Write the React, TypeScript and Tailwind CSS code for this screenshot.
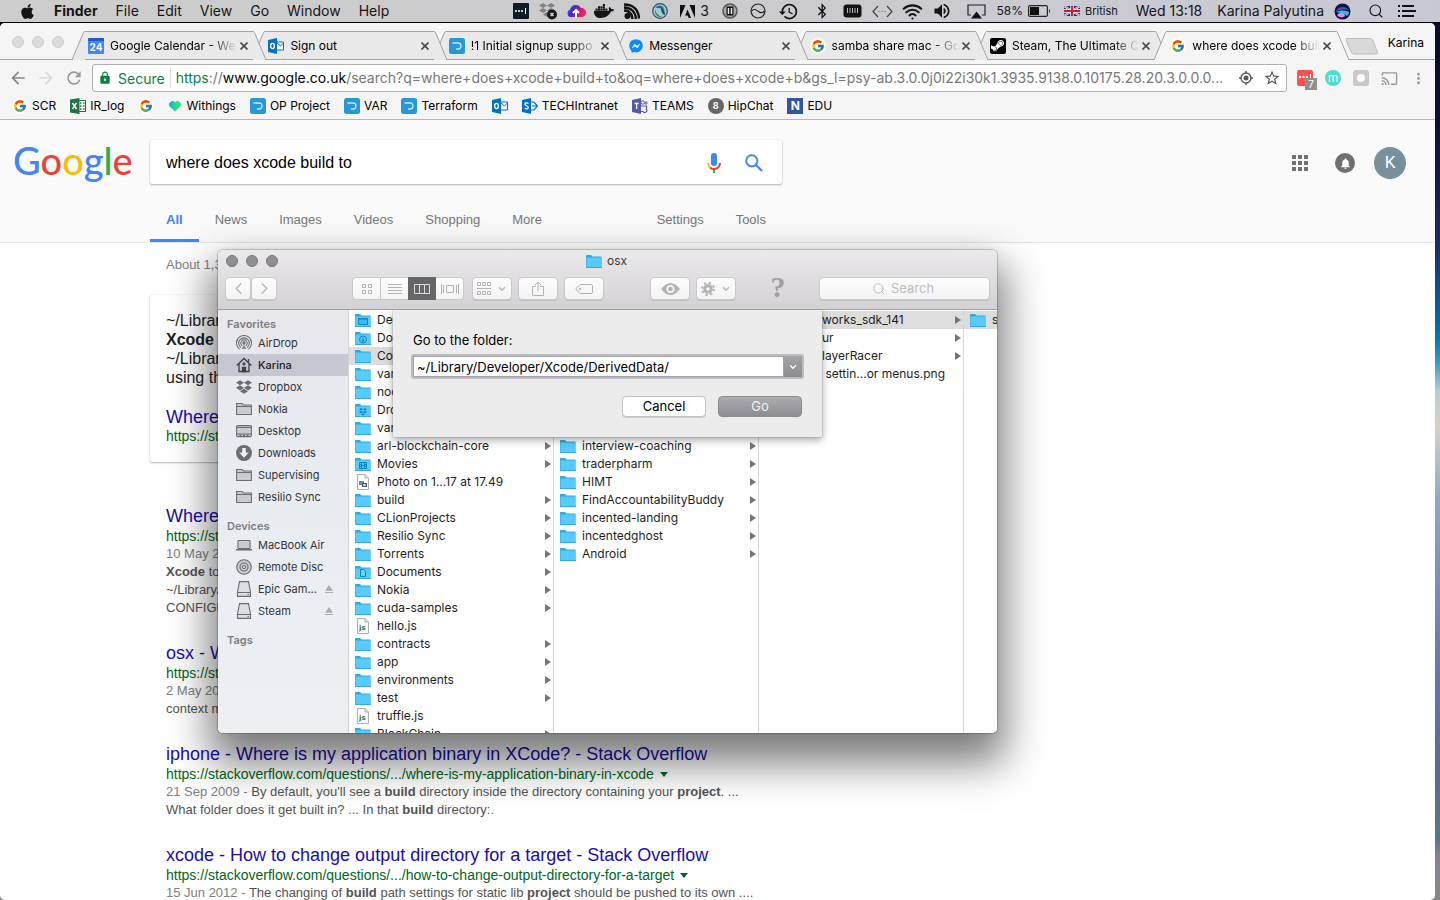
import type { ReactNode } from "react";
import { FaApple, FaBluetoothB, FaDocker, FaDropbox, FaFacebookMessenger, FaSteamSymbol } from "react-icons/fa";
import { FcGoogle } from "react-icons/fc";
import {
  MdArrowBack,
  MdArrowForward,
  MdCast,
  MdEject,
  MdHistory,
  MdLock,
  MdMoreVert,
  MdNotifications,
  MdRefresh,
  MdStarBorder,
  MdVolumeUp,
} from "react-icons/md";
import { ChevronDown, ChevronLeft, ChevronRight, Search, Wifi } from "lucide-react";

const UI = "font-['Inter',sans-serif]";
const ARIAL = "font-['Liberation_Sans',sans-serif]";

/* ---------- menu bar ---------- */

function MenuIcon({ width, label, children }: { width: string; label: string; children: ReactNode }) {
  return (
    <button aria-label={label} className={`flex h-[22px] shrink-0 items-center justify-center ${width}`}>
      {children}
    </button>
  );
}

function MenuBar() {
  return (
    <header
      className={`flex h-[22px] shrink-0 items-center bg-linear-to-r from-[#cdcdcd] via-[#cbcbcd] to-[#c8c8d4] pl-[19px] pr-[17px] text-[14px] leading-[22px] whitespace-nowrap text-[#151515] ${UI}`}
    >
      <nav className="flex items-center gap-[18px]">
        <button aria-label="Apple menu">
          <FaApple size={17} />
        </button>
        <button className="font-bold">Finder</button>
        <button>File</button>
        <button>Edit</button>
        <button>View</button>
        <button>Go</button>
        <button>Window</button>
        <button>Help</button>
      </nav>
      <div className="ml-auto flex items-center">
        <MenuIcon width="w-[26px]" label="Password manager">
          <svg width="16" height="16" viewBox="0 0 16 16">
            <rect width="16" height="16" rx="1" fill="#0c1c26" />
            <g fill="#fff">
              <circle cx="3" cy="8" r="1" />
              <circle cx="6" cy="8" r="1" />
              <circle cx="9" cy="8" r="1" />
              <rect x="12" y="5" width="1" height="6" />
            </g>
          </svg>
        </MenuIcon>
        <MenuIcon width="w-[28px]" label="Dropbox">
          <svg width="20" height="18" viewBox="0 0 20 18">
            <path d="M5 1l4 2.500L5 6 1 3.500zM13 1l4 2.500L13 6 9 3.500zM5 6l4 2.500L5 11 1 8.500zM13 6l4 2.500-4 2.500-4-2.500zM9 10l4 2.500L9 15l-4-2.500z" fill="#808085" />
            <circle cx="14" cy="12.500" r="5" fill="#1a1a1a" />
            <path d="M12.500 11l3 3M15.500 11l-3 3" stroke="#ddd" strokeWidth="1.300" />
          </svg>
        </MenuIcon>
        <MenuIcon width="w-[28px]" label="Cloud upload">
          <svg width="20" height="16" viewBox="0 0 20 16">
            <defs>
              <linearGradient id="cloud" x1="0" x2="1" y1="0" y2=".3">
                <stop offset="0" stopColor="#3a62f0" />
                <stop offset=".4" stopColor="#3b2bc8" />
                <stop offset=".65" stopColor="#b01890" />
                <stop offset="1" stopColor="#f8205a" />
              </linearGradient>
            </defs>
            <path d="M4 14a4 4 0 0 1 0-7.500A6 6 0 0 1 15 5a4.500 4.500 0 0 1 1 9z" fill="url(#cloud)" />
            <path d="M10 15V8M7 10l3-3 3 3" stroke="#fff" strokeWidth="2" fill="none" />
          </svg>
        </MenuIcon>
        <MenuIcon width="w-[28px]" label="Docker">
          <FaDocker size={20} />
        </MenuIcon>
        <MenuIcon width="w-[28px]" label="Feed">
          <svg width="17" height="17" viewBox="0 0 17 17" fill="none" stroke="#111" strokeWidth="2.400">
            <circle cx="4.500" cy="13" r="3" fill="#111" stroke="none" />
            <path d="M1 7.500c5 0 8 3 8.500 8.500M1 4.500c7.500 0 11.500 5 12 11.500M1 1.500c9 0 14.500 5 15 14" />
          </svg>
        </MenuIcon>
        <MenuIcon width="w-[28px]" label="Globe">
          <svg width="16" height="16" viewBox="0 0 16 16">
            <circle cx="8" cy="8" r="7.300" fill="#a9c7cf" stroke="#30505e" strokeWidth="1.200" />
            <path d="M3 5c3-4 8-3 9 1l2 3c-1-2-7-5-11-4z" fill="#156f8e" />
            <path d="M3 6c1 5 4 7 7 8-4 1-8-3-7-8z" fill="#208a45" />
            <path d="M9 5c3 1 4 4 4 7-2 0-4-3-4-7z" fill="#14506e" />
          </svg>
        </MenuIcon>
        <MenuIcon width="w-[42px]" label="Creative apps, 3 updates">
          <svg width="15" height="13" viewBox="0 0 15 13" fill="#0d0d0d">
            <path d="M0 0h5.500L0 13zM15 0H9.500L15 13zM7.500 4.500L11 13H8.700l-1-2.600H5.200z" />
          </svg>
          <span className="pl-[5px]">3</span>
        </MenuIcon>
        <MenuIcon width="w-[28px]" label="Pause">
          <svg width="16" height="16" viewBox="0 0 16 16" fill="none">
            <circle cx="8" cy="8" r="7" stroke="#555" strokeWidth="1.500" fill="#aaa" />
            <rect x="4.500" y="3.500" width="7" height="9" fill="#111" />
            <path d="M6.500 5v6M9.500 5v6" stroke="#eee" strokeWidth="1.500" />
          </svg>
        </MenuIcon>
        <MenuIcon width="w-[28px]" label="Monitor">
          <svg width="16" height="16" viewBox="0 0 16 16" fill="none" stroke="#222" strokeWidth="1.200">
            <circle cx="8" cy="8" r="7" />
            <path d="M1.500 8c3-3 5-1 7 .5s4 1.500 6-.5" />
          </svg>
        </MenuIcon>
        <MenuIcon width="w-[34px]" label="Time Machine">
          <MdHistory size={21} />
        </MenuIcon>
        <MenuIcon width="w-[32px]" label="Bluetooth">
          <FaBluetoothB size={16} />
        </MenuIcon>
        <MenuIcon width="w-[30px]" label="Memory">
          <svg width="19" height="14" viewBox="0 0 19 14">
            <rect x=".5" y=".5" width="18" height="13" rx="3" fill="#111" />
            <path d="M4.500 4v5M7 4v5M9.500 4v5M12 4v5M14.500 4v5" stroke="#bbb" />
          </svg>
        </MenuIcon>
        <MenuIcon width="w-[30px]" label="Network">
          <svg width="21" height="13" viewBox="0 0 21 13" fill="none" stroke="#444" strokeWidth="1.200">
            <path d="M6 1L1 6.500 6 12M15 1l5 5.500-5 5.500" />
            <path d="M6.500 6.500h8" strokeDasharray="1.500 1.500" stroke="#888" />
          </svg>
        </MenuIcon>
        <MenuIcon width="w-[30px]" label="Wi-Fi">
          <Wifi size={21} strokeWidth={2.4} />
        </MenuIcon>
        <MenuIcon width="w-[28px]" label="Volume">
          <MdVolumeUp size={20} />
        </MenuIcon>
        <MenuIcon width="w-[41px]" label="AirPlay">
          <svg width="19" height="15" viewBox="0 0 19 15">
            <path d="M4 11H1V1h17v10h-3" fill="none" stroke="#222" strokeWidth="1.200" />
            <path d="M9.500 7.500L15 14.500H4z" fill="#111" />
          </svg>
        </MenuIcon>
        <span className="text-[12px]">58%</span>
        <MenuIcon width="w-[32px]" label="Battery">
          <svg width="23" height="12" viewBox="0 0 23 12">
            <rect x=".6" y=".6" width="18.800" height="10.800" rx="1.500" fill="none" stroke="#222" strokeWidth="1.200" />
            <rect x="2" y="2" width="9" height="8" fill="#111" />
            <path d="M21 4q2 2 0 4z" fill="#222" />
          </svg>
        </MenuIcon>
        <button className="ml-[9px] flex items-center gap-[5px] text-[11px]">
          <svg width="16" height="10" viewBox="0 0 16 10">
            <rect width="16" height="10" fill="#1d2f7c" />
            <path d="M0 0l16 10M16 0L0 10" stroke="#fff" strokeWidth="2" />
            <path d="M0 0l16 10M16 0L0 10" stroke="#c8202f" strokeWidth=".7" />
            <path d="M8 0v10M0 5h16" stroke="#fff" strokeWidth="3.400" />
            <path d="M8 0v10M0 5h16" stroke="#c8202f" strokeWidth="2" />
          </svg>
          British
        </button>
        <button className="pl-[18px]">Wed 13:18</button>
        <button className="pl-[15px]">Karina Palyutina</button>
        <MenuIcon width="w-[36px]" label="Siri">
          <svg width="17" height="17" viewBox="0 0 17 17">
            <circle cx="8.500" cy="8.500" r="8" fill="#14123f" />
            <path d="M2 8c3-5 9-5 13-1-5-1-9 0-13 1z" fill="#3957d8" />
            <path d="M2 9c4-2 9-2 13 0 0 2-1 3-2 4-3-3-7-3-11-4z" fill="#2fb8e0" />
            <path d="M3 12c3-3 7-3 8 1-2 2-6 2-8-1z" fill="#e08ae8" />
          </svg>
        </MenuIcon>
        <MenuIcon width="w-[31px]" label="Spotlight">
          <Search size={16} strokeWidth={1.7} />
        </MenuIcon>
        <MenuIcon width="w-[32px]" label="Notification Center">
          <svg width="18" height="12" viewBox="0 0 18 12" stroke="#111" strokeWidth="2">
            <path d="M0 1h2M4 1h12M0 6h2M4 6h14M0 11h2M4 11h12" />
          </svg>
        </MenuIcon>
      </div>
    </header>
  );
}

/* ---------- small site icons ---------- */

function GoogleIcon() {
  return (
    <span className="flex size-[16px] shrink-0 items-center justify-center rounded-full bg-white">
      <FcGoogle size={14} />
    </span>
  );
}

function DocIcon() {
  return (
    <svg width="16" height="16" viewBox="0 0 16 16" className="shrink-0">
      <rect width="16" height="16" rx="2.500" fill="#2698d6" />
      <path d="M3.500 5H9a3 3 0 0 1 0 6H7" fill="none" stroke="#c9e6f6" strokeWidth="1.300" />
    </svg>
  );
}

function OutlookIcon() {
  return (
    <svg width="16" height="16" viewBox="0 0 16 16" className="shrink-0">
      <path d="M9 4h6.500v8H9M9 5l3.500 3L15.500 5" fill="#fff" stroke="#0a6cbd" />
      <path d="M0 2l9-2v16l-9-2z" fill="#0072c6" />
      <ellipse cx="4.500" cy="8" rx="1.900" ry="2.600" fill="none" stroke="#fff" strokeWidth="1.400" />
    </svg>
  );
}

function CalendarIcon() {
  return (
    <span className="flex size-[16px] shrink-0 items-center justify-center rounded-[1px] border-t-[3px] border-[#2a56c6] bg-[#4285f4] text-[10px] leading-none font-bold text-white">
      24
    </span>
  );
}

function SteamIcon() {
  return (
    <span className="flex size-[16px] shrink-0 items-center justify-center rounded-[2px] bg-black text-white">
      <FaSteamSymbol size={15} />
    </span>
  );
}

function LetterIcon({ letter, box }: { letter: string; box: string }) {
  return (
    <span className={`flex size-[16px] shrink-0 items-center justify-center leading-none font-bold text-white ${box}`}>
      {letter}
    </span>
  );
}

/* ---------- browser ---------- */

type Tab = { title: string; icon: ReactNode; active?: boolean; z: string };

const tabs: Tab[] = [
  { title: "Google Calendar - We", icon: <CalendarIcon />, z: "z-[6]" },
  { title: "Sign out", icon: <OutlookIcon />, z: "z-[5]" },
  { title: "!1 Initial signup suppo", icon: <DocIcon />, z: "z-[4]" },
  { title: "Messenger", icon: <FaFacebookMessenger size={14} color="#0a8cff" className="shrink-0" />, z: "z-[3]" },
  { title: "samba share mac - Go", icon: <GoogleIcon />, z: "z-[2]" },
  { title: "Steam, The Ultimate C", icon: <SteamIcon />, z: "z-[1]" },
  { title: "where does xcode buil", icon: <GoogleIcon />, active: true, z: "z-[7]" },
];

function BrowserTab({ tab }: { tab: Tab }) {
  const fill = tab.active ? "#f5f5f5" : "#e9e9e9";
  const faded = tab.title.length > 12;
  return (
    <div className={`relative -mr-[14px] flex h-[29px] min-w-0 flex-1 last:mr-0 ${tab.z}`}>
      <svg width="13" height="29" viewBox="0 0 13 29" className="shrink-0">
        <path d="M0 29L11.500 1.500Q12 .5 13 .5V29z" fill={fill} />
        <path d="M0 29L11.500 1.500Q12 .5 13 .5" fill="none" stroke="#a3a3a3" />
      </svg>
      <div
        className={`flex min-w-0 flex-1 items-center border-t border-[#a3a3a3] pl-[3px] pr-[2px] ${tab.active ? "bg-[#f5f5f5]" : "border-b bg-[#e9e9e9]"}`}
      >
        {tab.icon}
        <button
          className={`min-w-0 flex-1 overflow-hidden pl-[6px] text-left text-[12px] whitespace-nowrap text-black ${faded ? "mask-r-from-80%" : ""}`}
        >
          {tab.title}
        </button>
        <button aria-label={`Close ${tab.title}`} className="flex size-[14px] shrink-0 items-center justify-center">
          <svg width="8" height="8" viewBox="0 0 8 8" stroke="#4a4a4a" strokeWidth="1.600">
            <path d="M.5 .5l7 7M7.500 .5l-7 7" />
          </svg>
        </button>
      </div>
      <svg width="13" height="29" viewBox="0 0 13 29" className="shrink-0">
        <path d="M0 .5Q1 .5 1.500 1.500L13 29H0z" fill={fill} />
        <path d="M0 .5Q1 .5 1.500 1.500L13 29" fill="none" stroke="#a3a3a3" />
      </svg>
    </div>
  );
}

function TabStrip() {
  return (
    <div className="flex h-[37px] items-end border-b border-[#a3a3a3] pr-[11px]">
      <div className="flex w-[72px] shrink-0 gap-[8px] pb-[11px] pl-[12px]">
        <span className="size-[12px] rounded-full border border-[#cfcfcf] bg-[#dcdcdc]" />
        <span className="size-[12px] rounded-full border border-[#cfcfcf] bg-[#dcdcdc]" />
        <span className="size-[12px] rounded-full border border-[#cfcfcf] bg-[#dcdcdc]" />
      </div>
      <div className="-mb-px flex min-w-0 flex-1">
        {tabs.map((t) => (
          <BrowserTab key={t.title} tab={t} />
        ))}
      </div>
      <button aria-label="New tab" className="-ml-[4px] shrink-0 pb-[4px]">
        <svg width="34" height="17" viewBox="0 0 34 17">
          <path d="M2 .5h23q2 0 3 2l4.500 12q.5 1.500-1 1.500H9q-2 0-3-2L1 2Q.5 .5 2 .5z" fill="#d9d9d9" stroke="#bcbcbc" />
        </svg>
      </button>
      <button className="shrink-0 pb-[7px] pl-[9px] text-[12px] text-black">Karina</button>
    </div>
  );
}

function AddressRow() {
  return (
    <div className="flex h-[34px] items-center pt-[2px] pr-[8px] pl-[8px] text-[#999]">
      <div className="flex items-center gap-[8px] pr-[8px]">
        <button aria-label="Back" className="text-[#888]">
          <MdArrowBack size={20} />
        </button>
        <button aria-label="Forward" className="text-[#dadada]">
          <MdArrowForward size={20} />
        </button>
        <button aria-label="Reload">
          <MdRefresh size={20} />
        </button>
      </div>
      <div className="flex h-[28px] min-w-0 flex-1 items-center rounded-[3px] border border-[#b0b0b0] bg-white pr-[5px] pl-[5px]">
        <MdLock size={14} color="#0b8043" />
        <span className="pl-[6px] text-[14px] text-[#0b8043]">Secure</span>
        <span className="mx-[5px] h-[20px] w-px shrink-0 bg-[#dcdcdc]" />
        <div role="textbox" aria-label="Address" className="min-w-0 flex-1 overflow-hidden text-[14px] leading-[20px] whitespace-nowrap text-[#777]">
          <span className="text-[#0b8043]">https</span>://<span className="text-black">www.google.co.uk</span>
          /search?q=where+does+xcode+build+to&oq=where+does+xcode+b&gs_l=psy-ab.3.0.0j0i22i30k1.3935.9138.0.10175.28.20.3.0.0.0...
        </div>
        <button aria-label="Location" className="pr-[9px] pl-[5px]">
          <svg width="16" height="16" viewBox="0 0 16 16" fill="none" stroke="#5a5a5a" strokeWidth="1.400">
            <circle cx="8" cy="8" r="5" />
            <circle cx="8" cy="8" r="2.500" fill="#5a5a5a" stroke="none" />
            <path d="M8 1v2M8 13v2M1 8h2M13 8h2" />
          </svg>
        </button>
        <button aria-label="Bookmark this page" className="text-[#5a5a5a]">
          <MdStarBorder size={18} />
        </button>
      </div>
      <div className="flex shrink-0 items-center gap-[12px] pl-[10px]">
        <button aria-label="Passwords, 7" className="relative size-[16px] rounded-[2px] bg-[#ff4f50]">
          <svg width="16" height="16" viewBox="0 0 16 16" fill="#fff">
            <circle cx="3" cy="7" r="1.200" />
            <circle cx="6.500" cy="7" r="1.200" />
            <circle cx="10" cy="7" r="1.200" />
            <path d="M13 4h1v6h-1z" />
          </svg>
          <span className="absolute top-[8px] left-[8px] h-[12px] w-[12px] bg-[#8f8f8f] text-[10px] leading-[12px] text-white">7</span>
        </button>
        <button aria-label="Extension m" className="size-[16px] rounded-full bg-[#4fdccb] text-[12px] leading-[14px] text-white">
          m
        </button>
        <button aria-label="Extension" className="flex size-[16px] items-center justify-center rounded-[3px] bg-[#c9c9c9]">
          <span className="size-[8px] rounded-full bg-white" />
        </button>
        <button aria-label="Cast">
          <MdCast size={17} />
        </button>
        <button aria-label="Menu">
          <MdMoreVert size={17} />
        </button>
      </div>
    </div>
  );
}

const bookmarks: { name: string; icon: ReactNode; hideName?: boolean }[] = [
  { name: "SCR", icon: <GoogleIcon /> },
  {
    name: "IR_log",
    icon: (
      <svg width="16" height="16" viewBox="0 0 16 16">
        <rect x="8" y="2.500" width="7.500" height="11" fill="#fff" stroke="#1f7346" />
        <path d="M10 5h1.500M10 8h1.500M10 11h1.500M13 5h1.500M13 8h1.500M13 11h1.500" stroke="#1f7346" strokeWidth="1.300" />
        <path d="M0 1.500L9.500 0v16L0 14.500z" fill="#1f7346" />
        <path d="M2.500 5l4 6M6.500 5l-4 6" stroke="#fff" strokeWidth="1.500" />
      </svg>
    ),
  },
  { name: "Google", icon: <GoogleIcon />, hideName: true },
  {
    name: "Withings",
    icon: (
      <svg width="14" height="16" viewBox="0 0 14 16">
        <defs>
          <linearGradient id="heart" x1="0" x2="1">
            <stop offset="0" stopColor="#1c9fe8" />
            <stop offset=".55" stopColor="#22e08a" />
            <stop offset="1" stopColor="#32e86a" />
          </linearGradient>
        </defs>
        <path d="M7 13.500L1.800 8.500A3.200 3.200 0 0 1 7 4.500a3.200 3.200 0 0 1 5.200 4z" fill="url(#heart)" />
      </svg>
    ),
  },
  { name: "OP Project", icon: <DocIcon /> },
  { name: "VAR", icon: <DocIcon /> },
  { name: "Terraform", icon: <DocIcon /> },
  { name: "Outlook", icon: <OutlookIcon />, hideName: true },
  {
    name: "TECHIntranet",
    icon: (
      <svg width="16" height="16" viewBox="0 0 16 16">
        <path d="M9 4l3 0 3.500 4L12 12H9M10 8h5" fill="none" stroke="#0072c6" strokeWidth="1.200" />
        <path d="M0 2l9-2v16l-9-2z" fill="#0072c6" />
        <path d="M6.500 5.500C4.500 4.300 2.800 5 3 6.300c.2 1.500 3.300 1.400 3.300 3.200 0 1.500-2 1.700-3.600.8" fill="none" stroke="#fff" strokeWidth="1.300" />
      </svg>
    ),
  },
  {
    name: "TEAMS",
    icon: (
      <svg width="16" height="16" viewBox="0 0 16 16">
        <path d="M9 8h5.500v3.500A2 2 0 0 1 11 13.500H9" fill="none" stroke="#5558af" strokeWidth="1.200" />
        <circle cx="10.800" cy="4.500" r="1.700" fill="none" stroke="#5558af" />
        <circle cx="14" cy="5" r="1.200" fill="none" stroke="#5558af" />
        <path d="M0 2l9-2v16l-9-2z" fill="#5558af" />
        <path d="M2.500 5.500h4.200M4.600 5.500V11" stroke="#fff" strokeWidth="1.300" />
      </svg>
    ),
  },
  { name: "HipChat", icon: <LetterIcon letter="8" box="rounded-full bg-[#666] text-[9px]" /> },
  { name: "EDU", icon: <LetterIcon letter="N" box="bg-[#2f55a4] text-[12px]" /> },
];

function Bookmarks() {
  return (
    <nav className="flex h-[26px] items-center gap-[14px] border-b border-[#b6b6b6] pb-[2px] pl-[12px] text-[12px] text-black">
      {bookmarks.map((b) => (
        <a key={b.name} href="#" aria-label={b.name} className="flex shrink-0 items-center gap-[4px]">
          {b.icon}
          {!b.hideName && b.name}
        </a>
      ))}
    </nav>
  );
}

/* ---------- search page ---------- */

function SearchHeader() {
  return (
    <div className="border-b border-[#e5e5e5] bg-[#fafafa] pt-[20px]">
      <div className="flex items-center pr-[29px]">
        <a href="#" aria-label="Google" className="w-[150px] shrink-0 pb-[4px] pl-[13px] font-['Lato',sans-serif] text-[38px] leading-[40px] font-medium">
          <span className="text-[#4285f4]">G</span>
          <span className="text-[#ea4335]">o</span>
          <span className="text-[#fbbc05]">o</span>
          <span className="text-[#4285f4]">g</span>
          <span className="text-[#34a853]">l</span>
          <span className="text-[#ea4335]">e</span>
        </a>
        <form className="flex h-[44px] w-[632px] items-center rounded-[2px] bg-white pt-[2px] pr-[19px] pl-[16px] shadow-[0_1px_2px_rgba(0,0,0,0.28),0_0_1px_rgba(0,0,0,0.2)]">
          <input aria-label="Search" defaultValue="where does xcode build to" className="min-w-0 flex-1 text-[16px] text-black outline-none" />
          <button type="button" aria-label="Search by voice" className="pr-[24px]">
            <svg width="14" height="20" viewBox="0 0 14 20" fill="none">
              <rect x="4" width="6" height="13" rx="3" fill="#4285f4" />
              <path d="M1 10a6 6 0 0 0 2 4.500" stroke="#fbbc05" strokeWidth="2" />
              <path d="M3 14.500A6 6 0 0 0 13 10" stroke="#ea4335" strokeWidth="2" />
              <path d="M7 17v3" stroke="#34a853" strokeWidth="2" />
            </svg>
          </button>
          <button type="button" aria-label="Search">
            <svg width="18" height="18" viewBox="0 0 18 18" fill="none" stroke="#4285f4" strokeWidth="2">
              <circle cx="6.800" cy="6.800" r="5.600" />
              <path d="M11 11l6 6" strokeWidth="2.300" />
            </svg>
          </button>
        </form>
        <div className="ml-auto flex items-center pt-[2px]">
          <button aria-label="Google apps" className="pr-[27px]">
            <svg width="16" height="16" viewBox="0 0 16 16" fill="#707070">
              <path d="M0 0h4v4H0zM6 0h4v4H6zM12 0h4v4h-4zM0 6h4v4H0zM6 6h4v4H6zM12 6h4v4h-4zM0 12h4v4H0zM6 12h4v4H6zM12 12h4v4h-4z" />
            </svg>
          </button>
          <button aria-label="Notifications" className="flex size-[20px] items-center justify-center rounded-full bg-[#707070] text-white">
            <MdNotifications size={13} />
          </button>
          <button aria-label="Account" className="ml-[19px] size-[32px] rounded-full bg-[#78909c] font-['Roboto',sans-serif] text-[17px] text-white">
            K
          </button>
        </div>
      </div>
      <nav className="ml-[150px] flex w-[632px] justify-between pt-[20px] text-[13px] leading-[32px] text-[#777]">
        <div className="flex h-[38px]">
          <a href="#" className="border-b-[3px] border-[#4285f4] px-[16px] font-bold text-[#4285f4]">All</a>
          <a href="#" className="px-[16px]">News</a>
          <a href="#" className="px-[16px]">Images</a>
          <a href="#" className="px-[16px]">Videos</a>
          <a href="#" className="px-[16px]">Shopping</a>
          <a href="#" className="px-[16px]">More</a>
        </div>
        <div className="flex">
          <a href="#" className="px-[16px]">Settings</a>
          <a href="#" className="px-[16px]">Tools</a>
        </div>
      </nav>
    </div>
  );
}

function Result({ title, url, date, children }: { title: string; url: string; date: string; children: ReactNode }) {
  return (
    <article className="pb-[25px]">
      <h3 className="text-[18px] leading-[22px]">
        <a href="#" className="text-[#1a0dab]">{title}</a>
      </h3>
      <div className="flex items-center gap-[6px] text-[14px] leading-[18px] text-[#006621]">
        {url}
        <svg width="8" height="5" viewBox="0 0 8 5" fill="#006621">
          <path d="M0 0h8L4 5z" />
        </svg>
      </div>
      <p className="text-[13px] leading-[18px] text-[#545454]">
        <span className="text-[#808080]">{date}</span>
        {children}
      </p>
    </article>
  );
}

function SearchResults() {
  return (
    <main className="w-[782px] pl-[150px]">
      <p className="h-[52px] pt-[12px] pl-[16px] text-[13px] leading-[20px] text-[#808080]">About 1,3</p>
      <section className="h-[167px] rounded-[2px] px-[16px] pt-[16px] text-[16px] leading-[19px] text-[#222] shadow-[0_1px_2px_rgba(0,0,0,0.28),0_0_1px_rgba(0,0,0,0.2)]">
        <p>~/Librar</p>
        <p className="font-bold">Xcode</p>
        <p>~/Librar</p>
        <p>using th</p>
        <h3 className="pt-[19px] text-[18px] leading-[22px]">
          <a href="#" className="text-[#1a0dab]">Where</a>
        </h3>
        <p className="text-[14px] leading-[16px] text-[#006621]">https://st</p>
      </section>
      <div className="pt-[43px] pl-[16px]">
        <Result title="Where" url="https://st" date="10 May 2">
          <br />
          <b>Xcode</b> to
          <br />
          ~/Library/
          <br />
          CONFIGU
        </Result>
        <Result title="osx - W" url="https://st" date="2 May 20">
          <br />
          context m
        </Result>
        <Result
          title="iphone - Where is my application binary in XCode? - Stack Overflow"
          url="https://stackoverflow.com/questions/.../where-is-my-application-binary-in-xcode"
          date="21 Sep 2009 - "
        >
          By default, you'll see a <b>build</b> directory inside the directory containing your <b>project</b>. ...
          <br />
          What folder does it get built in? ... In that <b>build</b> directory:.
        </Result>
        <Result
          title="xcode - How to change output directory for a target - Stack Overflow"
          url="https://stackoverflow.com/questions/.../how-to-change-output-directory-for-a-target"
          date="15 Jun 2012 - "
        >
          The changing of <b>build</b> path settings for static lib <b>project</b> should be pushed to its own ....
        </Result>
      </div>
    </main>
  );
}

/* ---------- Finder ---------- */

type FolderMark = "desktop" | "download" | "dropbox" | "movie" | "doc";

function Folder({ mark }: { mark?: FolderMark }) {
  return (
    <svg width="16" height="15" viewBox="0 0 16 15" className="shrink-0">
      <path d="M0 1.500Q0 1 .5 1H5l1.500 1.500H15.500V14H0z" fill="#2fa9e0" />
      <path d="M.5 3.500h15V13H.5z" fill="#57cbfb" />
      <path d="M0 13.500h16" stroke="#37a8dc" />
      {mark === "desktop" && <path d="M3.500 5.500h9v6h-9zM3.500 6h9" fill="#40b8f0" stroke="#0f86c0" />}
      {mark === "download" && (
        <g fill="none" stroke="#0f86c0">
          <circle cx="8" cy="8.500" r="3.500" />
          <path d="M8 6.500v4M6.300 8.800L8 10.500l1.700-1.700" />
        </g>
      )}
      {mark === "dropbox" && (
        <path
          d="M6 5l2 1.300L6 7.600 4 6.300zM10 5l2 1.300-2 1.300-2-1.300zM6 7.800l2 1.300-2 1.300-2-1.300zM10 7.800l2 1.300-2 1.300-2-1.300zM8 10l2 1.200-2 1.200-2-1.200z"
          fill="#0f86c0"
        />
      )}
      {mark === "movie" && (
        <path
          d="M4.500 5.500h7v6h-7zM6.500 5.500v6M9.500 5.500v6M4.500 7.500h2M4.500 9.500h2M9.500 7.500h2M9.500 9.500h2M6.500 8.500h3"
          fill="none"
          stroke="#0f86c0"
        />
      )}
      {mark === "doc" && <path d="M5.500 4.500h3l2 2v5h-5z" fill="#6fd4fc" stroke="#0f86c0" />}
    </svg>
  );
}

function FileIcon({ kind }: { kind: "js" | "photo" }) {
  return (
    <svg width="16" height="16" viewBox="0 0 16 16" className="shrink-0">
      <path d="M2.500 .5h7.500l3.500 3.500v11.500h-11z" fill="#fcfcfc" stroke="#b0b0b0" />
      <path d="M10 .5V4h3.500" fill="#e0e0e0" stroke="#b0b0b0" />
      {kind === "js" ? (
        <text x="4" y="12" fontSize="7" fontWeight="700" fontFamily="DejaVu Sans" fill="#2c7a35">
          js
        </text>
      ) : (
        <g>
          <rect x="4" y="7" width="5" height="4" fill="#6b87c8" />
          <rect x="7" y="9" width="5" height="4" fill="#55595f" />
          <circle cx="9.500" cy="11" r="1.300" fill="#dde" />
        </g>
      )}
    </svg>
  );
}

type Entry = { name: string; mark?: FolderMark; file?: "js" | "photo"; selected?: boolean };

const homeEntries: Entry[] = [
  { name: "De", mark: "desktop" },
  { name: "Do", mark: "download" },
  { name: "Co", selected: true },
  { name: "var" },
  { name: "nod" },
  { name: "Dro", mark: "dropbox" },
  { name: "var" },
  { name: "arl-blockchain-core" },
  { name: "Movies", mark: "movie" },
  { name: "Photo on 1...17 at 17.49", file: "photo" },
  { name: "build" },
  { name: "CLionProjects" },
  { name: "Resilio Sync" },
  { name: "Torrents" },
  { name: "Documents", mark: "doc" },
  { name: "Nokia" },
  { name: "cuda-samples" },
  { name: "hello.js", file: "js" },
  { name: "contracts" },
  { name: "app" },
  { name: "environments" },
  { name: "test" },
  { name: "truffle.js", file: "js" },
  { name: "BlockChain" },
];

const projectEntries: Entry[] = [
  { name: "interview-coaching" },
  { name: "traderpharm" },
  { name: "HIMT" },
  { name: "FindAccountabilityBuddy" },
  { name: "incented-landing" },
  { name: "incentedghost" },
  { name: "Android" },
];

function Arrow() {
  return (
    <svg width="6" height="8" viewBox="0 0 6 8" fill="#757575" className="ml-auto shrink-0">
      <path d="M0 0l6 4-6 4z" />
    </svg>
  );
}

function EntryRow({ entry }: { entry: Entry }) {
  return (
    <li className={`flex h-[18px] items-center gap-[6px] pr-[2px] pl-[6px] ${entry.selected ? "bg-[#dcdcdc]" : ""}`}>
      {entry.file ? <FileIcon kind={entry.file} /> : <Folder mark={entry.mark} />}
      <span className="whitespace-nowrap">{entry.name}</span>
      {!entry.file && <Arrow />}
    </li>
  );
}

const sideStroke = { fill: "none", stroke: "#6c6d72", strokeWidth: 1.1 };

function SideFolder() {
  return (
    <svg width="16" height="16" viewBox="0 0 16 16" {...sideStroke}>
      <path d="M.6 13.500v-11H6l1.500 1.500h7.900v9.500z" fill="#c9cbd0" />
      <path d="M.6 5.500h14.800" />
    </svg>
  );
}

function Drive() {
  return (
    <svg width="16" height="16" viewBox="0 0 16 16" {...sideStroke}>
      <path d="M3.500 .6h9l2 10.400v4.400h-13V11z" fill="#dcdee2" />
      <path d="M1.500 11.500h13M11.500 13.500h1.500" />
    </svg>
  );
}

const favorites: { name: string; icon: ReactNode; selected?: boolean }[] = [
  {
    name: "AirDrop",
    icon: (
      <svg width="16" height="16" viewBox="0 0 16 16" {...sideStroke}>
        <path d="M3.500 14a7.500 7.500 0 1 1 9 0M5 12.500a5.300 5.300 0 1 1 6 0M6.300 10.800a3.200 3.200 0 1 1 3.400 0" />
        <circle cx="8" cy="8" r="1.100" fill="#6c6d72" />
        <path d="M8 9.500L5.500 14h5z" fill="#8a8b90" stroke="none" />
      </svg>
    ),
  },
  {
    name: "Karina",
    selected: true,
    icon: (
      <svg width="16" height="16" viewBox="0 0 16 16" fill="none" stroke="#3f3f46" strokeWidth="1.300">
        <path d="M.7 8.500L8 1.500l7.300 7M12.500 5V2M3 7v7.500h10V7" />
        <path d="M6.500 14.500v-4h3v4z" fill="#3f3f46" />
        <circle cx="8" cy="6.800" r="1" />
      </svg>
    ),
  },
  { name: "Dropbox", icon: <FaDropbox size={16} color="#6c6d72" /> },
  { name: "Nokia", icon: <SideFolder /> },
  {
    name: "Desktop",
    icon: (
      <svg width="16" height="16" viewBox="0 0 16 16" {...sideStroke}>
        <rect x=".6" y="2.600" width="14.800" height="11" rx="1" fill="#c9cbd0" />
        <path d="M1 4.500h14M1 11h14" />
        <path d="M3.500 12.300h9" strokeWidth="1.600" strokeDasharray="2 1.500" />
      </svg>
    ),
  },
  {
    name: "Downloads",
    icon: (
      <svg width="16" height="16" viewBox="0 0 16 16">
        <circle cx="8" cy="8" r="8" fill="#6c6d72" />
        <path d="M6.200 3h3.600v4.500h3L8 12.800 3.200 7.500h3z" fill="#f0f0f0" />
      </svg>
    ),
  },
  { name: "Supervising", icon: <SideFolder /> },
  { name: "Resilio Sync", icon: <SideFolder /> },
];

const devices: { name: string; icon: ReactNode; eject?: boolean }[] = [
  {
    name: "MacBook Air",
    icon: (
      <svg width="16" height="16" viewBox="0 0 16 16" {...sideStroke}>
        <rect x="2" y="3.500" width="12" height="8" rx=".5" fill="#c9cbd0" />
        <path d="M0 12.700h16" strokeWidth="1.500" />
      </svg>
    ),
  },
  {
    name: "Remote Disc",
    icon: (
      <svg width="16" height="16" viewBox="0 0 16 16" {...sideStroke}>
        <circle cx="8" cy="8" r="7.300" fill="#c9cbd0" />
        <circle cx="8" cy="8" r="4" />
        <circle cx="8" cy="8" r="1.500" fill="#eee" />
      </svg>
    ),
  },
  { name: "Epic Gam...", icon: <Drive />, eject: true },
  { name: "Steam", icon: <Drive />, eject: true },
];

function SideHeading({ children }: { children: string }) {
  return <h2 className="pt-[10px] pl-[9px] text-[11px] leading-[16px] font-semibold text-[#7c7d82]">{children}</h2>;
}

function SideItem({ name, icon, selected, eject }: { name: string; icon: ReactNode; selected?: boolean; eject?: boolean }) {
  return (
    <li className={selected ? "bg-[#c6c7d0] font-medium text-[#1c1c22]" : "text-[#333539]"}>
      <a href="#" className="flex h-[22px] items-center pr-[12px] pl-[18px] text-[11px]">
        <span className="shrink-0 pr-[6px]">{icon}</span>
        <span className="whitespace-nowrap">{name}</span>
        {eject && <MdEject size={14} color="#a9abb0" className="ml-auto shrink-0" />}
      </a>
    </li>
  );
}

const toolButton =
  "flex h-[23px] shrink-0 items-center justify-center border-[#c9c8ca] bg-linear-to-b from-[#fdfdfd] to-[#f3f3f3] text-[#b3b3b3]";
const roundButton = "rounded-[4px] border shadow-[0_1px_0_rgba(0,0,0,0.1)]";

function FinderHeader() {
  return (
    <div className="relative rounded-t-[5px] border-b border-[#a09fa1] bg-linear-to-b from-[#ebe9eb] to-[#d3d1d4]">
      <div className="flex h-[22px] items-center">
        <div className="flex w-[54px] gap-[8px] pl-[8px]">
          <button aria-label="Close window" className="size-[12px] shrink-0 rounded-full border border-[#77767a] bg-[#8f8e92]" />
          <button aria-label="Minimise window" className="size-[12px] shrink-0 rounded-full border border-[#77767a] bg-[#8f8e92]" />
          <button aria-label="Zoom window" className="size-[12px] shrink-0 rounded-full border border-[#77767a] bg-[#8f8e92]" />
        </div>
        <h1 className="flex flex-1 items-center justify-center gap-[5px] pr-[56px] text-[12px] text-[#3a3a3a]">
          <Folder />
          osx
        </h1>
      </div>
      <div className="flex h-[37px] items-start px-[7px] pt-[5px]">
        <button aria-label="Back" className={`${toolButton} ${roundButton} w-[26px]`}>
          <ChevronLeft size={19} strokeWidth={1.5} />
        </button>
        <button aria-label="Forward" className={`${toolButton} ${roundButton} w-[26px]`}>
          <ChevronRight size={19} strokeWidth={1.5} />
        </button>
        <div className="ml-[75px] flex shrink-0">
          <button aria-label="Icon view" className={`${toolButton} w-[29px] rounded-l-[4px] border`}>
            <svg width="10" height="10" viewBox="0 0 10 10" fill="none" stroke="#b3b3b3">
              <path d="M.5 .5h3v3h-3zM6.500 .5h3v3h-3zM.5 6.500h3v3h-3zM6.500 6.500h3v3h-3z" />
            </svg>
          </button>
          <button aria-label="List view" className={`${toolButton} w-[27px] border-y`}>
            <svg width="14" height="10" viewBox="0 0 14 10" stroke="#b3b3b3">
              <path d="M0 .5h14M0 3.500h14M0 6.500h14M0 9.500h14" />
            </svg>
          </button>
          <button aria-label="Column view" className="flex h-[23px] w-[28px] items-center justify-center bg-[#666568]">
            <svg width="16" height="10" viewBox="0 0 16 10" fill="none" stroke="#dcdcdc">
              <path d="M.5 .5h15v9H.5zM5.500 0v10M10.500 0v10" />
            </svg>
          </button>
          <button aria-label="Cover Flow view" className={`${toolButton} w-[28px] rounded-r-[4px] border-y border-r`}>
            <svg width="18" height="10" viewBox="0 0 18 10" fill="none" stroke="#b3b3b3">
              <path d="M5.500 1.500h7v7h-7zM.5 0v10M15.500 1v8M2.500 1v8M17.500 0v10" />
            </svg>
          </button>
        </div>
        <button aria-label="Arrange" className={`${toolButton} ${roundButton} ml-[8px] w-[40px] gap-[5px]`}>
          <svg width="15" height="13" viewBox="0 0 15 13" fill="none" stroke="#b3b3b3">
            <path d="M.5 .5h3v3h-3zM5.500 .5h3v3h-3zM10.500 .5h3v3h-3zM0 6.500h14M.5 9.500h3v3h-3zM5.500 9.500h3v3h-3zM10.500 9.500h3v3h-3z" />
          </svg>
          <ChevronDown size={10} strokeWidth={3} />
        </button>
        <button aria-label="Share" className={`${toolButton} ${roundButton} ml-[6px] w-[40px]`}>
          <svg width="12" height="16" viewBox="0 0 12 16" fill="none" stroke="#b3b3b3">
            <path d="M4 5.500H.5v9h11v-9H8M6 10.500V1M3 4l3-3 3 3" />
          </svg>
        </button>
        <button aria-label="Tags" className={`${toolButton} ${roundButton} ml-[6px] w-[40px]`}>
          <svg width="18" height="10" viewBox="0 0 18 10" fill="none" stroke="#b3b3b3">
            <path d="M5 .5h11q1.500 0 1.500 1.500v6q0 1.500-1.500 1.500H5L.8 5z" />
            <circle cx="5" cy="5" r=".8" />
          </svg>
        </button>
        <button aria-label="Quick Look" className={`${toolButton} ${roundButton} ml-[46px] w-[40px]`}>
          <svg width="19" height="12" viewBox="0 0 19 12" fill="#b3b3b3">
            <path d="M0 6Q9.500-6 19 6 9.500 18 0 6z" />
            <circle cx="9.500" cy="6" r="4" fill="#f8f8f8" />
            <circle cx="9.500" cy="6" r="2.300" />
          </svg>
        </button>
        <button aria-label="Actions" className={`${toolButton} ${roundButton} ml-[6px] w-[40px] gap-[6px]`}>
          <svg width="14" height="14" viewBox="0 0 14 14" fill="none" stroke="#b3b3b3">
            <circle cx="7" cy="7" r="3.300" strokeWidth="3" />
            <circle cx="7" cy="7" r="6" strokeWidth="2" strokeDasharray="2.300 2.412" />
          </svg>
          <ChevronDown size={10} strokeWidth={3} />
        </button>
        <button aria-label="Help" className="ml-[32px] w-[20px] font-['Liberation_Serif',serif] text-[30px] leading-[20px] font-bold text-[#a09fa3]">
          ?
        </button>
        <label className={`${toolButton} ${roundButton} ml-auto w-[171px] gap-[5px] text-[13px]`}>
          <Search size={14} strokeWidth={1.5} />
          <input aria-label="Search" placeholder="Search" className="w-[46px] outline-none placeholder:text-[#bdbdbd]" />
        </label>
      </div>
    </div>
  );
}

function GoToFolderSheet() {
  return (
    <form className="absolute top-0 left-[175px] h-[127px] w-[429px] bg-[#ececec] px-[18px] pt-[20px] text-[13px] text-black shadow-[0_3px_8px_rgba(0,0,0,0.35),0_0_1px_rgba(0,0,0,0.5)]">
      <label htmlFor="folder-path" className="block pl-[2px] leading-[20px]">
        Go to the folder:
      </label>
      <div className="mt-[4px] flex h-[25px] rounded-[3px] border-[2px] border-[#bcbbc0] bg-[#a3a2a8]">
        <input
          id="folder-path"
          defaultValue="~/Library/Developer/Xcode/DerivedData/"
          className="min-w-0 flex-1 border border-[#a3a2a8] bg-white pl-[3px] text-black outline-none"
        />
        <button
          type="button"
          aria-label="Recent folders"
          className="flex w-[18px] items-center justify-center bg-linear-to-b from-[#a5a4a9] to-[#8c8b90] text-white"
        >
          <ChevronDown size={10} strokeWidth={3} />
        </button>
      </div>
      <div className="flex justify-end gap-[12px] pt-[17px] pr-[2px]">
        <button
          type="button"
          className="h-[21px] w-[84px] rounded-[4px] border border-[#c3c3c3] bg-white leading-[19px] shadow-[0_1px_0_rgba(0,0,0,0.12)]"
        >
          Cancel
        </button>
        <button
          type="button"
          className="h-[21px] w-[84px] rounded-[4px] border border-[#8a898e] bg-linear-to-b from-[#adacb1] to-[#8d8c91] leading-[19px] text-[#f0f0f0]"
        >
          Go
        </button>
      </div>
    </form>
  );
}

function FinderWindow() {
  return (
    <section
      aria-label="Finder"
      className={`absolute top-[250px] left-[218px] z-20 w-[779px] rounded-[5px] text-[13px] text-[#1e1e1e] shadow-[0_22px_42px_8px_rgba(0,0,0,0.52),0_0_1px_1px_rgba(0,0,0,0.2)] ${UI}`}
    >
      <FinderHeader />
      <div className="relative flex h-[423px] overflow-hidden rounded-b-[5px] bg-white text-[12px] leading-[18px]">
        <aside className="w-[131px] shrink-0 border-r border-[#d3d4d8] bg-linear-to-b from-[#e7e7ec] via-[#e9edf2] to-[#eeeff2]">
          <div className="-mt-[4px]">
            <SideHeading>Favorites</SideHeading>
          </div>
          <ul>
            {favorites.map((f) => (
              <SideItem key={f.name} {...f} />
            ))}
          </ul>
          <SideHeading>Devices</SideHeading>
          <ul>
            {devices.map((d) => (
              <SideItem key={d.name} {...d} />
            ))}
          </ul>
          <SideHeading>Tags</SideHeading>
        </aside>
        <ul className="w-[205px] shrink-0 border-r border-[#d8d8d8] pt-px">
          {homeEntries.map((e, i) => (
            <EntryRow key={i} entry={e} />
          ))}
        </ul>
        <ul className="w-[205px] shrink-0 border-r border-[#d8d8d8] pt-[127px]">
          {projectEntries.map((e) => (
            <EntryRow key={e.name} entry={e} />
          ))}
        </ul>
        <ul className="w-[205px] shrink-0 border-r border-[#d8d8d8] pt-px">
          <li className="flex h-[18px] items-center bg-[#dcdcdc] pr-[2px] pl-[63px]">
            works_sdk_141
            <Arrow />
          </li>
          <li className="flex h-[18px] items-center pr-[2px] pl-[63px]">
            ur
            <Arrow />
          </li>
          <li className="flex h-[18px] items-center pr-[2px] pl-[63px]">
            layerRacer
            <Arrow />
          </li>
          <li className="flex h-[18px] items-center pl-[63px] whitespace-nowrap">{"\u00a0"}settin...or menus.png</li>
        </ul>
        <ul className="min-w-0 flex-1 overflow-hidden pt-px">
          <li className="flex h-[18px] items-center gap-[6px] bg-[#dcdcdc] pl-[6px]">
            <Folder />s
          </li>
        </ul>
        <GoToFolderSheet />
      </div>
    </section>
  );
}

export default function App() {
  return (
    <div className="relative flex h-screen flex-col overflow-hidden bg-black">
      <MenuBar />
      <div className="mt-px flex min-h-0 flex-1 bg-[linear-gradient(to_bottom,#0a0a2c_0%,#0d1038_12%,#1b2a6b_25%,#0078b0_36%,#40a0c8_39%,#b8ccd4_42%,#d8d0c8_46%,#b0c0c8_50%,#90a8c8_54%,#7f98bc_60%,#6a78a8_73%,#5a6a90_85%,#56788a_93%,#88808f_95%,#888888_100%)] pr-[5px]">
        <div className="min-w-0 flex-1 overflow-hidden rounded-[5px] bg-white">
          <div className={`bg-[#f5f5f5] ${UI}`}>
            <TabStrip />
            <AddressRow />
            <Bookmarks />
          </div>
          <div className={ARIAL}>
            <SearchHeader />
            <SearchResults />
          </div>
        </div>
      </div>
      <FinderWindow />
    </div>
  );
}
